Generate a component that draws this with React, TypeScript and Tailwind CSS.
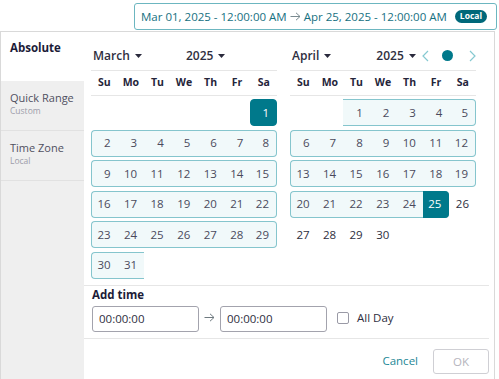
import React from "react"

type Cell = number | null

const MARCH: Cell[][] = [
  [null, null, null, null, null, null, 1],
  [2, 3, 4, 5, 6, 7, 8],
  [9, 10, 11, 12, 13, 14, 15],
  [16, 17, 18, 19, 20, 21, 22],
  [23, 24, 25, 26, 27, 28, 29],
  [30, 31, null, null, null, null, null],
]

const APRIL: Cell[][] = [
  [null, null, 1, 2, 3, 4, 5],
  [6, 7, 8, 9, 10, 11, 12],
  [13, 14, 15, 16, 17, 18, 19],
  [20, 21, 22, 23, 24, 25, 26],
  [27, 28, 29, 30, null, null, null],
]

const WEEKDAYS = ["Su", "Mo", "Tu", "We", "Th", "Fr", "Sa"]

function Caret() {
  return (
    <svg width="7" height="4" viewBox="0 0 7 4" className="ml-[5px]">
      <path d="M0 0h7L3.5 4z" fill="#2a2a3c" />
    </svg>
  )
}

function Arrow({ color = "#6f7a80" }: { color?: string }) {
  return (
    <svg width="11" height="9" viewBox="0 0 11 9" fill="none">
      <path d="M0.5 4.5h9.5M6 0.8l4 3.7-4 3.7" stroke={color} strokeWidth="1" />
    </svg>
  )
}

function Month({
  name,
  weeks,
  month,
  nav,
}: {
  name: string
  weeks: Cell[][]
  month: 3 | 4
  nav?: boolean
}) {
  const inRange = (d: Cell) => {
    if (d === null) return false
    if (month === 3) return d >= 1
    return d <= 25
  }
  const isSel = (d: Cell) => (month === 3 && d === 1) || (month === 4 && d === 25)

  return (
    <div className="w-[186px] shrink-0">
      <div className="flex h-[30px] items-center border-b border-[#e6e6e6] pl-[2px]">
        <div className="flex w-[93px] items-center text-[12px] font-semibold text-[#2e2e40]">
          {name}
          <Caret />
        </div>
        <div className="flex w-[47px] items-center text-[12px] font-semibold text-[#2e2e40]">
          2025
          <Caret />
        </div>
        {nav && (
          <div className="flex shrink-0 items-center">
            <svg width="7" height="12" viewBox="0 0 7 12" fill="none" className="ml-[3px]">
              <path d="M6 1L1 6l5 5" stroke="#86c9d1" strokeWidth="1.2" />
            </svg>
            <div className="ml-[13px] h-[11px] w-[11px] rounded-full bg-[#00798b]" />
            <svg width="7" height="12" viewBox="0 0 7 12" fill="none" className="ml-[16px]">
              <path d="M1 1l5 5-5 5" stroke="#86c9d1" strokeWidth="1.2" />
            </svg>
          </div>
        )}
      </div>
      <div className="grid h-[25px] grid-cols-7 items-center border-b border-[#e6e6e6] text-center text-[10.5px] font-bold text-[#25253a]">
        {WEEKDAYS.map((w) => (
          <div key={w}>{w}</div>
        ))}
      </div>
      <div className="mt-[3px] flex flex-col gap-[3.5px]">
        {weeks.map((week, wi) => (
          <div key={wi} className="grid h-[27px] grid-cols-7">
            {week.map((d, ci) => {
              if (d === null) return <div key={ci} />
              const r = inRange(d)
              const sel = isSel(d)
              const prev = ci > 0 ? week[ci - 1] : undefined
              const next = ci < 6 ? week[ci + 1] : undefined
              const leftEdge = ci === 0 || (prev !== null && prev !== undefined && !inRange(prev))
              const rightEdge = ci === 6 || (next !== null && next !== undefined && !inRange(next))
              let cls = "flex items-center justify-end pr-[7px] text-[11.5px] "
              if (sel) {
                cls += "bg-[#00798b] text-white border-y border-[#00798b] "
                if (month === 3) cls += "rounded-[4px] border-x "
                else cls += "rounded-r-[4px] border-r "
              } else if (r) {
                cls += "bg-[#f1f9fa] text-[#4a4a5c] border-y border-[#85c5cd] "
                if (leftEdge) cls += "border-l rounded-l-[4px] "
                if (rightEdge) cls += "border-r rounded-r-[4px] "
              } else {
                cls += "text-[#2e2e40] "
              }
              return (
                <div key={ci} className={cls}>
                  {d}
                </div>
              )
            })}
          </div>
        ))}
      </div>
    </div>
  )
}

export default function App() {
  return (
    <div className="h-[379px] w-[499px] overflow-hidden bg-white font-['Open_Sans',sans-serif]">
      <div className="flex h-[31px] justify-end pr-[2px] pt-[3px]">
        <div className="flex h-[27px] items-center rounded-[3px] border border-[#6cb6c0] pl-[6px] pr-[9px] text-[11.5px] text-[#16707f]">
          <span>Mar 01, 2025 - 12:00:00 AM</span>
          <span className="mx-[3px]">
            <Arrow color="#7a8a90" />
          </span>
          <span>Apr 25, 2025 - 12:00:00 AM</span>
          <span className="ml-[8px] flex h-[13px] items-center rounded-full bg-[#00687a] px-[5px] text-[8.5px] font-bold text-white">
            Local
          </span>
        </div>
      </div>
      <div className="flex h-[348px] w-[495px] border-l border-r border-t border-[#d9d9d9]">
        <div className="flex w-[83px] shrink-0 flex-col bg-[#efefef]">
          <div className="h-[49px] bg-white pl-[9px] pt-[7px] text-[11.5px] font-bold text-[#1c1c38]">
            Absolute
          </div>
          <div className="h-[50px] border-b border-[#e1e1e1] pl-[9px] pt-[9px]">
            <div className="text-[11px] leading-[15px] text-[#50505f]">Quick Range</div>
            <div className="text-[8.5px] leading-[12px] text-[#9d9daa]">Custom</div>
          </div>
          <div className="h-[50px] border-b border-[#e1e1e1] pl-[9px] pt-[9px]">
            <div className="text-[11px] leading-[15px] text-[#50505f]">Time Zone</div>
            <div className="text-[8.5px] leading-[12px] text-[#9d9daa]">Local</div>
          </div>
        </div>
        <div className="flex flex-1 flex-col pr-[5px]">
          <div className="flex h-[253px] gap-[13px] pl-[7px] pt-[9px]">
            <Month name="March" weeks={MARCH} month={3} />
            <Month name="April" weeks={APRIL} month={4} nav />
          </div>
          <div className="border-t border-[#e6e6e6] px-[8px] pb-[6px]">
            <div className="text-[11.5px] font-bold leading-[17px] text-[#1c1c38]">Add time</div>
            <div className="mt-[3px] flex items-center">
              <div className="flex h-[26px] w-[107px] items-center rounded-[3px] border border-[#a3a3ad] pl-[6px] text-[11.5px] text-[#2e2e40]">
                00:00:00
              </div>
              <span className="mx-[5px] mb-[4px]">
                <Arrow />
              </span>
              <div className="flex h-[26px] w-[107px] items-center rounded-[3px] border border-[#a3a3ad] pl-[6px] text-[11.5px] text-[#2e2e40]">
                00:00:00
              </div>
              <div className="ml-[10px] mb-[2px] h-[12px] w-[12px] rounded-[2px] border border-[#9a9aa6]" />
              <span className="ml-[8px] mb-[2px] text-[11.5px] text-[#2e2e40]">All Day</span>
            </div>
          </div>
          <div className="flex items-start justify-end border-t border-[#e6e6e6] pt-[10px]">
            <span className="mr-[15px] mt-[3px] text-[11.5px] text-[#1d8796]">Cancel</span>
            <div className="flex h-[25px] w-[56px] items-center justify-center rounded-[3px] border border-[#cfcfd4] text-[11.5px] text-[#b5b5bd]">
              OK
            </div>
          </div>
        </div>
      </div>
    </div>
  )
}
